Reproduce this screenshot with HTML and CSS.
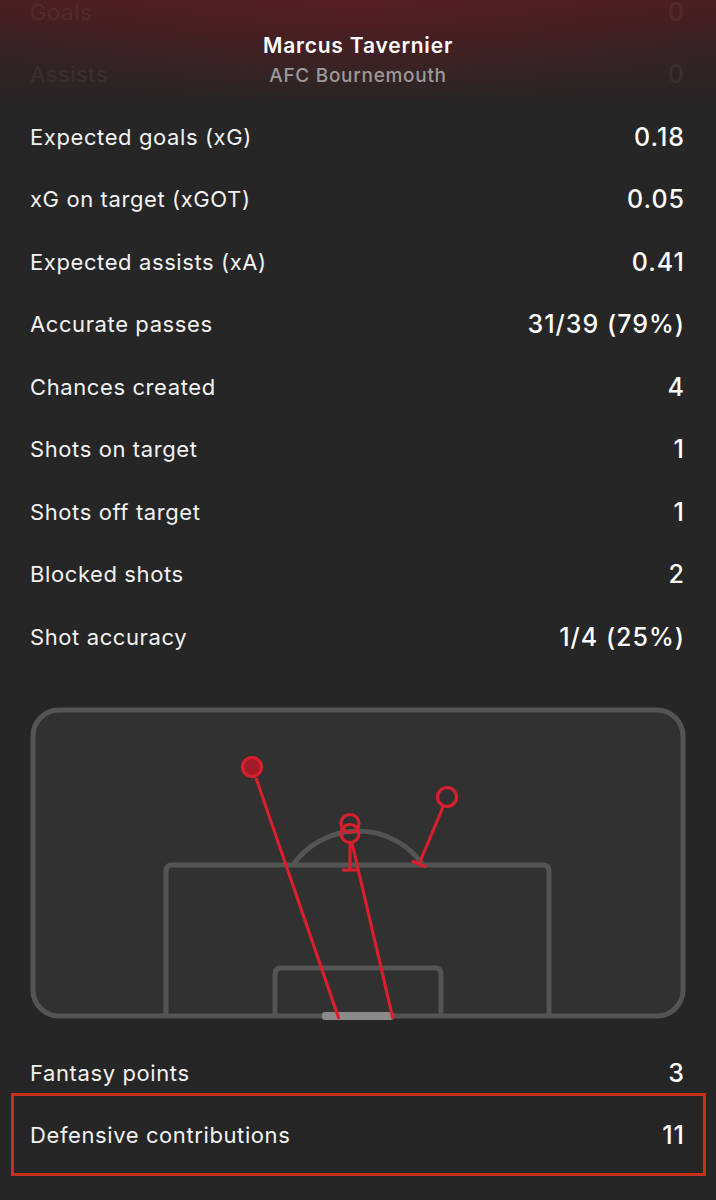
FILE: index.html
```html
<!DOCTYPE html>
<html>
<head>
<meta charset="utf-8">
<link rel="stylesheet" href="styles.css">
</head>
<body>
<div class="page">
  <header class="player-header">
    <div class="player-name">Marcus Tavernier</div>
    <div class="player-team">AFC Bournemouth</div>
  </header>

  <ul class="stats">
    <li class="row"><span class="label">Goals</span><span class="value">0</span></li>
    <li class="row"><span class="label">Assists</span><span class="value">0</span></li>
    <li class="row"><span class="label">Expected goals (xG)</span><span class="value">0.18</span></li>
    <li class="row"><span class="label">xG on target (xGOT)</span><span class="value">0.05</span></li>
    <li class="row"><span class="label">Expected assists (xA)</span><span class="value">0.41</span></li>
    <li class="row"><span class="label">Accurate passes</span><span class="value">31/39 (79%)</span></li>
    <li class="row"><span class="label">Chances created</span><span class="value">4</span></li>
    <li class="row"><span class="label">Shots on target</span><span class="value">1</span></li>
    <li class="row"><span class="label">Shots off target</span><span class="value">1</span></li>
    <li class="row"><span class="label">Blocked shots</span><span class="value">2</span></li>
    <li class="row"><span class="label">Shot accuracy</span><span class="value">1/4 (25%)</span></li>
  </ul>

  <svg class="shotmap" width="716" height="330" viewBox="0 700 716 330" xmlns="http://www.w3.org/2000/svg">
    <rect x="33" y="710" width="650" height="306" rx="26" fill="#313131" stroke="#545454" stroke-width="5"/>
    <path d="M166 1016 V871 Q166 865 172 865 H543 Q549 865 549 871 V1016" fill="none" stroke="#545454" stroke-width="5"/>
    <path d="M275 1016 V974 Q275 968 281 968 H435 Q441 968 441 974 V1016" fill="none" stroke="#545454" stroke-width="5"/>
    <path d="M293.1 865 A79 79 0 0 1 422.9 865" fill="none" stroke="#545454" stroke-width="5"/>
    <rect x="322" y="1012" width="72" height="8" rx="3" fill="#8a8a8a"/>

    <g stroke="#d81f2d" stroke-width="3.2" fill="none" stroke-linecap="butt">
      <line x1="256" y1="778" x2="339" y2="1019"/>
      <line x1="352" y1="843" x2="393" y2="1019"/>
      <line x1="350" y1="842" x2="350" y2="870"/>
      <line x1="342" y1="870" x2="358" y2="870"/>
      <line x1="443" y1="807" x2="419" y2="864"/>
      <line x1="411.6" y1="860.9" x2="426.4" y2="867.1"/>
      <circle cx="252" cy="767" r="9.5" fill="#a11b27"/>
      <circle cx="350" cy="823.5" r="9"/>
      <circle cx="350" cy="833.5" r="9"/>
      <circle cx="447" cy="797" r="9.5"/>
    </g>
  </svg>

  <ul class="stats stats-bottom">
    <li class="row row-compact"><span class="label">Fantasy points</span><span class="value">3</span></li>
    <li class="row row-highlight"><span class="label">Defensive contributions</span><span class="value">11</span></li>
  </ul>
</div>
</body>
</html>
```

FILE: styles.css
```css
* { box-sizing: border-box; }

html, body {
  margin: 0;
  padding: 0;
  background: #262626;
}

body {
  font-family: Inter, "Noto Sans", "Liberation Sans", sans-serif;
  color: #f2f2f2;
  width: 716px;
  height: 1200px;
  overflow: hidden;
}

.page {
  position: relative;
  display: flow-root;
}

.player-header {
  position: absolute;
  top: 0;
  left: 0;
  right: 0;
  height: 106px;
  z-index: 2;
  display: flex;
  flex-direction: column;
  align-items: center;
  padding-top: 32px;
  background:
    radial-gradient(ellipse 60% 100% at 50% 0%, rgba(100, 28, 34, 0.5), rgba(100, 28, 34, 0) 100%),
    linear-gradient(180deg, rgba(74, 30, 34, 0.94) 0%, rgba(54, 34, 36, 0.94) 45%, rgba(38, 38, 38, 0.95) 100%);
}

.player-name {
  font-size: 21px;
  font-weight: 600;
  letter-spacing: 0.8px;
  color: #ffffff;
  line-height: 28px;
}

.player-team {
  font-size: 19px;
  font-weight: 500;
  letter-spacing: 0.7px;
  color: #9b9b9b;
  line-height: 24px;
  margin-top: 4px;
}

.stats {
  list-style: none;
  margin: -19.5px 0 0;
  padding: 0;
}

.row {
  display: flex;
  justify-content: space-between;
  align-items: center;
  height: 62.5px;
  padding: 0 31px 0 30px;
}

.label {
  font-size: 22px;
  font-weight: 400;
  letter-spacing: 0.6px;
  color: #f2f2f2;
}

.value {
  font-size: 25px;
  font-weight: 500;
  letter-spacing: 1px;
  color: #ffffff;
}

.shotmap {
  display: block;
  margin-top: 32px;
}

.stats-bottom {
  margin-top: 23px;
}

.row-compact {
  height: 40px;
}

.row-highlight {
  height: 83px;
  margin: 0 10px 0 11px;
  padding: 0 18px 0 16px;
  border: 3px solid #c92f1d;
}
```
